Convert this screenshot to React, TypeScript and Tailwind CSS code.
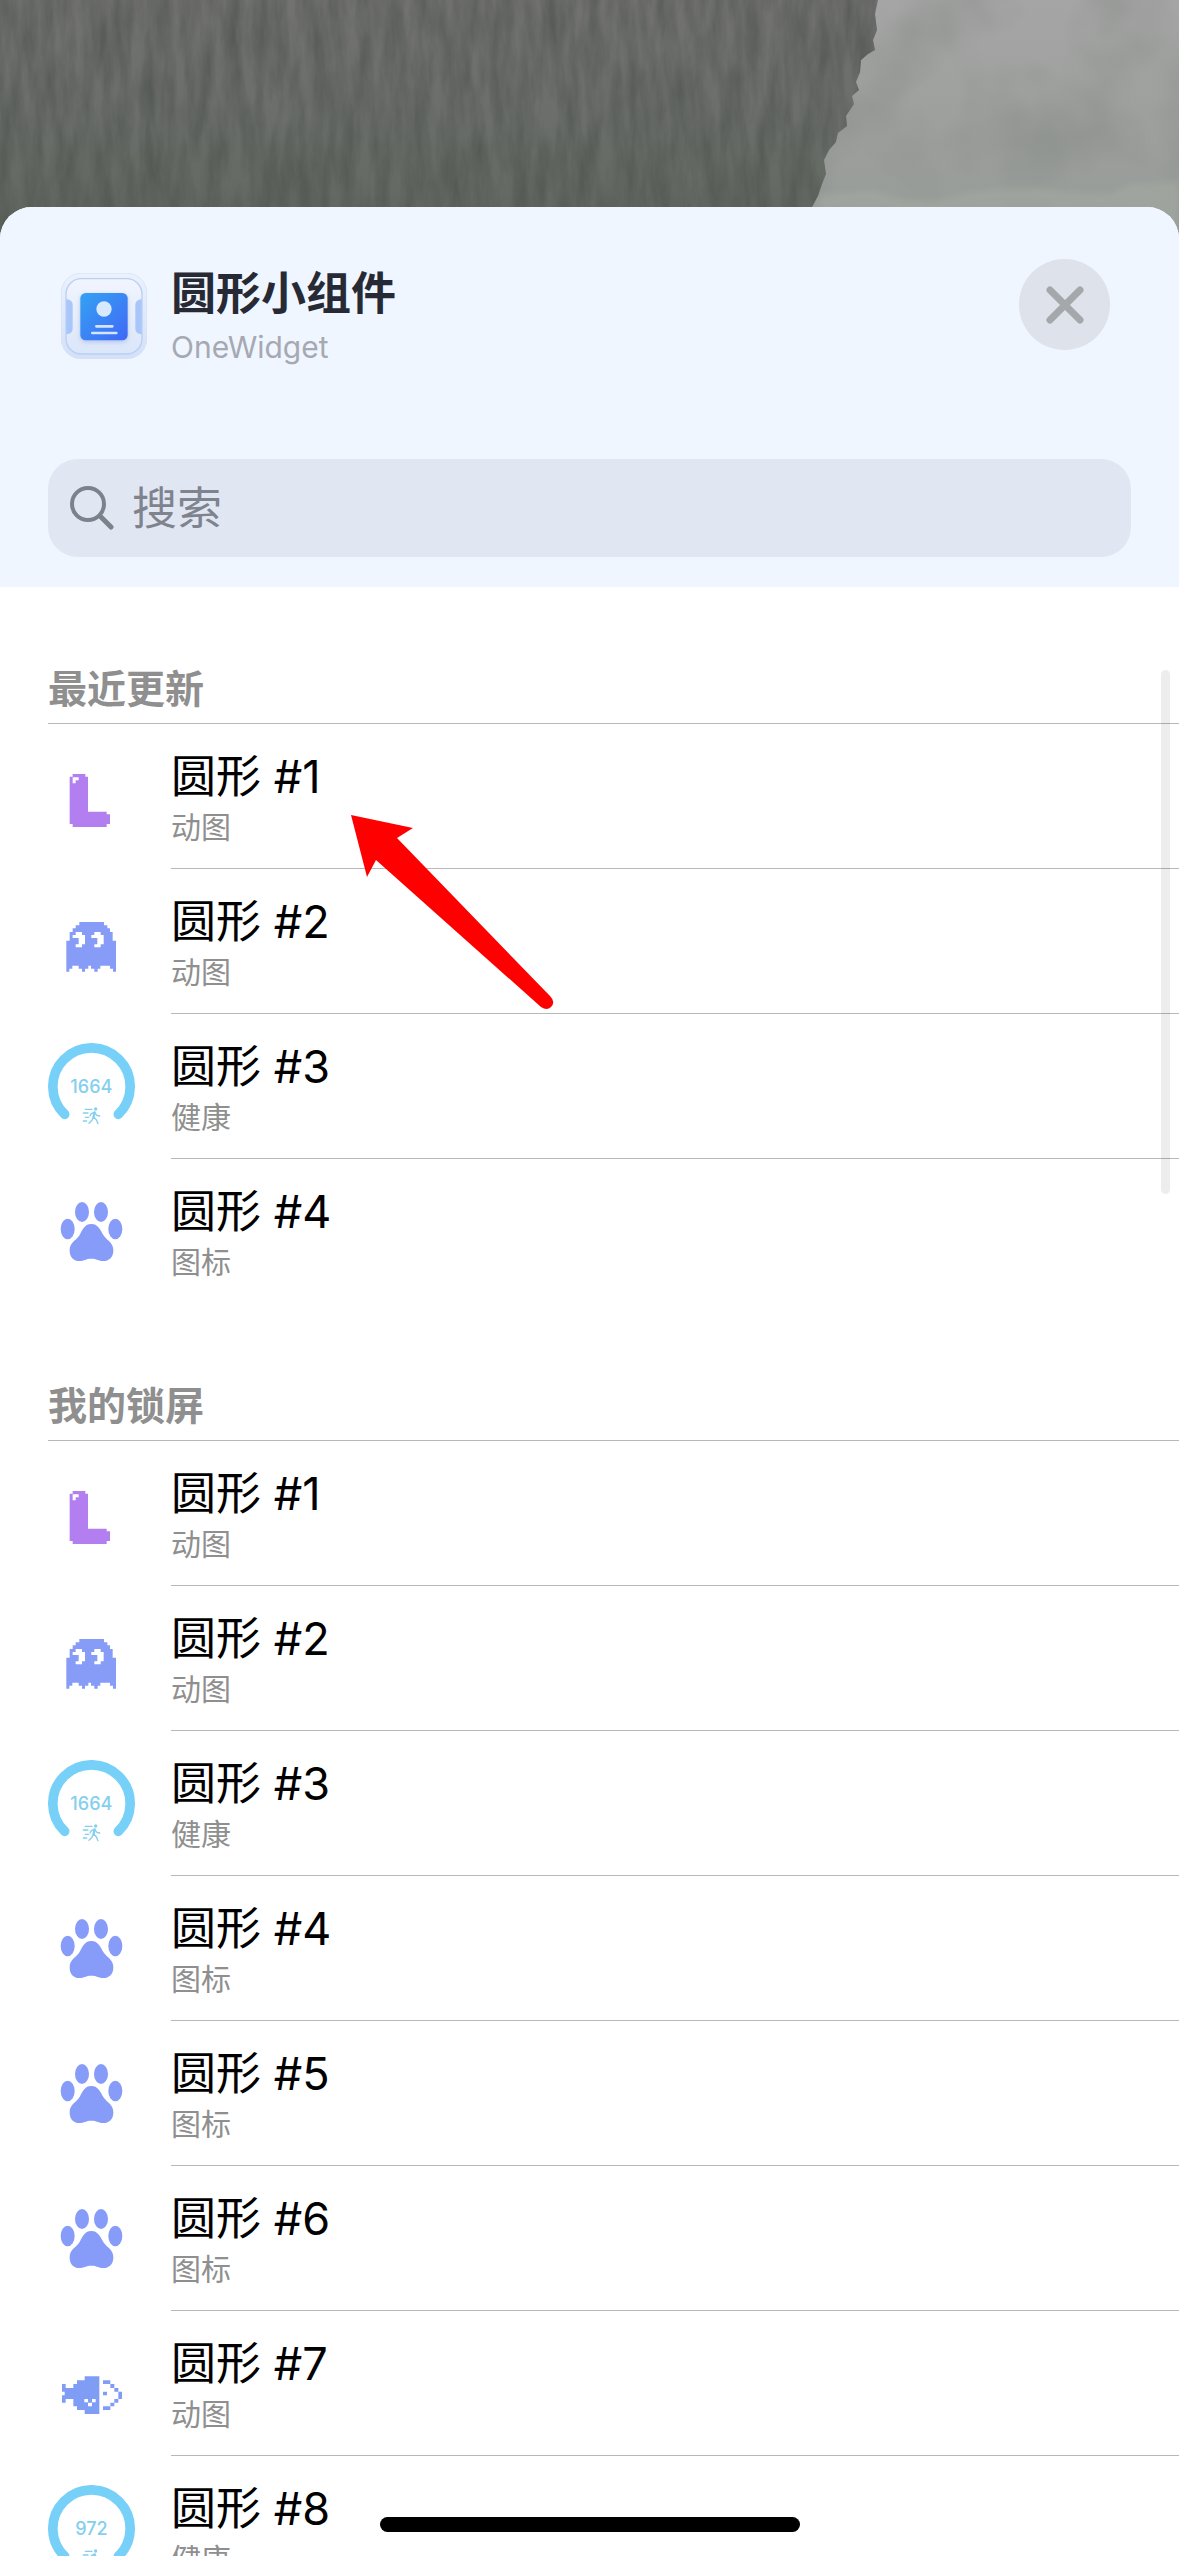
import React from "react";

type IconKind = "block" | "ghost" | "ring" | "paw" | "fish";
type Item = { id: number; kind: IconKind; category: string; value?: string };

const recent: Item[] = [
  { id: 1, kind: "block", category: "动图" },
  { id: 2, kind: "ghost", category: "动图" },
  { id: 3, kind: "ring", category: "健康", value: "1664" },
  { id: 4, kind: "paw", category: "图标" },
];

const lockScreen: Item[] = [
  ...recent,
  { id: 5, kind: "paw", category: "图标" },
  { id: 6, kind: "paw", category: "图标" },
  { id: 7, kind: "fish", category: "动图" },
  { id: 8, kind: "ring", category: "健康", value: "972" },
];

function Wallpaper() {
  const edge =
    "M0 0H878L875 14L877 30L873 40L875 50L868 54L861 60L860 72L856 82L859 90L852 96L854 104L846 116L847 126L838 133L836 142L829 150L824 160L826 174L822 184L818 196L812 207L808 260H0Z";
  return (
    <svg
      className="absolute inset-x-0 top-0 h-[260px] w-full"
      viewBox="0 0 1179 260"
      preserveAspectRatio="none"
      aria-hidden="true"
    >
      <defs>
        <linearGradient id="darkTone" x1="0" y1="0" x2="0" y2="1">
          <stop offset="0" stopColor="#727271" />
          <stop offset="0.45" stopColor="#6b6e6b" />
          <stop offset="0.85" stopColor="#616860" />
        </linearGradient>
        <linearGradient id="lightTone" x1="0" y1="0" x2="0" y2="1">
          <stop offset="0" stopColor="#a5a5a5" />
          <stop offset="0.8" stopColor="#989c98" />
        </linearGradient>
        <filter id="fur" x="0" y="0" width="100%" height="100%" colorInterpolationFilters="sRGB">
          <feTurbulence type="fractalNoise" baseFrequency="0.07 0.014" numOctaves="4" seed="7" />
          <feColorMatrix values="0 0 0 0 0.29  0 0 0 0 0.31  0 0 0 0 0.29  1.1 0 0 0 -0.32" />
          <feComposite in2="SourceGraphic" operator="in" />
        </filter>
        <filter id="mist" x="0" y="0" width="100%" height="100%" colorInterpolationFilters="sRGB">
          <feTurbulence type="fractalNoise" baseFrequency="0.012 0.012" numOctaves="3" seed="3" />
          <feColorMatrix values="0 0 0 0 0.5  0 0 0 0 0.52  0 0 0 0 0.5  0.8 0 0 0 -0.3" />
        </filter>
        <filter id="soft">
          <feGaussianBlur stdDeviation="3" />
        </filter>
      </defs>
      <rect width="1179" height="260" fill="url(#lightTone)" />
      <rect width="1179" height="260" filter="url(#mist)" />
      <path
        d="M820 260V196L870 190L905 200L935 201L960 194L1000 189L1040 188L1080 193L1110 194L1130 184L1179 182V260Z"
        fill="#a3a7a1"
        opacity="0.7"
        filter="url(#soft)"
      />
      <path d={edge} fill="url(#darkTone)" />
      <path d={edge} fill="#000" filter="url(#fur)" />
    </svg>
  );
}

function AppIcon() {
  return (
    <svg className="size-[86px] shrink-0" viewBox="0 0 258 258" aria-hidden="true">
      <defs>
        <linearGradient id="tile" x1="0" y1="0" x2="1" y2="1">
          <stop offset="0" stopColor="#35a2f3" />
          <stop offset="1" stopColor="#3f68f6" />
        </linearGradient>
        <linearGradient id="frame" x1="0" y1="0" x2="0" y2="1">
          <stop offset="0" stopColor="#ebf2fd" />
          <stop offset="1" stopColor="#d3e0f9" />
        </linearGradient>
        <linearGradient id="plate" x1="0" y1="0" x2="0" y2="1">
          <stop offset="0" stopColor="#f1f5fe" />
          <stop offset="1" stopColor="#dbe6fa" />
        </linearGradient>
        <filter id="tileShadow" x="-20%" y="-20%" width="140%" height="150%">
          <feDropShadow dx="0" dy="5" stdDeviation="7" floodColor="#7f9bdc" floodOpacity="0.5" />
        </filter>
      </defs>
      <rect x="1" y="1" width="256" height="256" rx="58" fill="url(#frame)" stroke="#d0dff4" strokeWidth="2" />
      <rect x="15" y="17" width="228" height="226" rx="46" fill="url(#plate)" stroke="#b9cff5" strokeWidth="4" />
      <path d="M16 78Q35 82 35 94V168Q35 182 16 184Z" fill="#a9c6fb" />
      <path d="M242 78Q223 82 223 94V168Q223 182 242 184Z" fill="#a9c6fb" />
      <rect x="58" y="60" width="142" height="142" rx="16" fill="url(#tile)" filter="url(#tileShadow)" />
      <circle cx="129" cy="108" r="23" fill="#d8e8fd" />
      <path d="M106 160H154M94 180H166" stroke="#d3e4fd" strokeWidth="8" strokeLinecap="round" />
    </svg>
  );
}

function BlockIcon() {
  return (
    <svg className="size-[87px]" viewBox="144 69 261 261" aria-hidden="true">
      <path
        fill="#b37ff0"
        d="M218 132H256V140H264V245H320V253H330V282H320V291H218V282H209V140H218Z"
      />
      <path fill="#fff" d="M218 142H236V151H227V160H218Z" />
    </svg>
  );
}

function GhostIcon() {
  return (
    <svg className="size-[87px]" viewBox="144 504 261 261" aria-hidden="true">
      <path
        fill="#879cf6"
        d="M238 576H312V586H322V595H330V606H338V632H348V725H339V716H330V707H320V716H320V707H301V716H293V725H283V716H273V707H265V716H255V725H246V716H236V707H217V716H208V725H199V632H209V606H218V595H227V586H238Z"
      />
      <path
        fill="#fff"
        d="M227 606H246V615H255V643H246V652H227V643H236V624H218V615H227ZM283 606H302V615H311V643H302V652H283V643H292V624H274V615H283Z"
      />
    </svg>
  );
}

function RingIcon({ value }: { value: string }) {
  return (
    <svg className="size-[87px]" viewBox="144 69 261 261">
      <path
        d="M194 283A116 116 0 1 1 355 283"
        fill="none"
        stroke="#77d0f7"
        strokeWidth="29"
        strokeLinecap="round"
      />
      <text
        x="274"
        y="219"
        textAnchor="middle"
        fill="#83cfee"
        fontSize="54"
        fontWeight="500"
        fontFamily="Inter, sans-serif"
      >
        {value}
      </text>
      <circle cx="287" cy="267" r="5" fill="#83cfee" />
      <path
        d="M283 277L280 291L289 299L294 311M280 291L276 301L267 310M283 277L274 281L270 288M284 278L291 286L299 288M256 268H276M250 279H264M256 292H266M250 303H260"
        fill="none"
        stroke="#83cfee"
        strokeWidth="4"
        strokeLinecap="round"
        strokeLinejoin="round"
      />
      <path d="M284 277L281 290" stroke="#83cfee" strokeWidth="7" strokeLinecap="round" />
    </svg>
  );
}

function PawIcon() {
  return (
    <svg className="size-[87px]" viewBox="144 504 261 261" fill="#879cf9" aria-hidden="true">
      <ellipse cx="246" cy="576" rx="21" ry="30" />
      <ellipse cx="303" cy="576" rx="21" ry="30" />
      <ellipse cx="203" cy="627" rx="21" ry="31" />
      <ellipse cx="346" cy="627" rx="21" ry="31" />
      <path d="M274 612C296 612 301 632 312 648C324 664 340 668 340 692C340 712 326 723 310 723C296 723 290 716 274 716C258 716 252 723 238 723C222 723 209 712 209 692C209 668 225 664 237 648C247 632 252 612 274 612Z" />
    </svg>
  );
}

function FishIcon() {
  return (
    <svg className="size-[87px]" viewBox="144 90 261 261" fill="#7f9df5" aria-hidden="true">
      <path d="M186 222H197V234H220V222H231V211H254V199H298V312H254V300H231V289H220V267H197V278H186V256H194V245H186Z" />
      <path d="M309 211H331V222H309ZM331 222H343V234H331ZM343 234H355V245H343ZM355 245H366V267H355ZM343 267H355V278H343ZM331 278H343V289H331ZM309 289H331V300H309ZM309 245H321V256H309Z" />
      <path fill="#fff" d="M253 267H264V277H253ZM276 267H287V277H276ZM264 278H276V289H264Z" />
    </svg>
  );
}

function ItemIcon({ item }: { item: Item }) {
  switch (item.kind) {
    case "block":
      return <BlockIcon />;
    case "ghost":
      return <GhostIcon />;
    case "ring":
      return <RingIcon value={item.value ?? ""} />;
    case "paw":
      return <PawIcon />;
    default:
      return <FishIcon />;
  }
}

function Section({ title, items }: { title: string; items: Item[] }) {
  return (
    <section>
      <h2 className="ml-12 border-b border-[#b8b8b8] pt-[74px] pb-[6px] text-[39px] leading-[56px] font-bold text-[#8f8f8f]">
        {title}
      </h2>
      <ul>
        {items.map((item) => (
          <li key={item.id} className="group">
            <button type="button" className="flex h-[145px] w-full items-center gap-9 pl-12 text-left">
              <span className="shrink-0">
                <ItemIcon item={item} />
              </span>
              <span className="flex h-full flex-1 flex-col border-b border-[#b8b8b8] pt-[23px] group-last:border-transparent">
                <span className="text-[45px] leading-[60px] text-black">圆形 #{item.id}</span>
                <span className="text-[30px] leading-10 text-[#8f8f8f]">{item.category}</span>
              </span>
            </button>
          </li>
        ))}
      </ul>
    </section>
  );
}

export default function App() {
  return (
    <div
      lang="zh-CN"
      className="relative flex h-screen flex-col overflow-hidden bg-white pt-[207px] font-[Inter,'Noto_Sans_CJK_SC',sans-serif]"
    >
      <Wallpaper />
      <main className="relative flex min-h-0 flex-1 flex-col overflow-hidden rounded-t-[32px] bg-white">
        <header className="bg-[#eff6ff] px-12 pt-[52px] pb-[30px]">
          <div className="flex items-start pr-[21px] pl-[13px]">
            <div className="mt-2 flex flex-1 items-center gap-6">
              <AppIcon />
              <div>
                <h1 className="text-[45px] leading-[54px] font-bold text-[#272a35]">圆形小组件</h1>
                <p className="mt-2 text-[30px] leading-9 text-[#a6a9b1]">OneWidget</p>
              </div>
            </div>
            <button
              type="button"
              aria-label="关闭"
              className="flex size-[91px] items-center justify-center rounded-full bg-[#dee2ea]"
            >
              <svg className="size-10" viewBox="0 0 40 40" aria-hidden="true">
                <path d="M5 5L35 35M35 5L5 35" stroke="#a5a8aa" strokeWidth="7" strokeLinecap="round" />
              </svg>
            </button>
          </div>
          <div className="mt-[94px] flex h-[98px] items-center gap-[18px] rounded-[30px] bg-[#e1e7f2] pr-6 pl-[22px]">
            <svg className="size-11 shrink-0" viewBox="0 0 44 44" fill="none" stroke="#7d818c" aria-hidden="true">
              <circle cx="18" cy="18" r="16" strokeWidth="4" />
              <path d="M30 30L41 41" strokeWidth="5" strokeLinecap="round" />
            </svg>
            <input
              type="search"
              aria-label="搜索"
              placeholder="搜索"
              className="h-full min-w-0 flex-1 bg-transparent text-[45px] text-[#272a35] outline-none placeholder:text-[#7f838e]"
            />
          </div>
        </header>
        <div className="relative min-h-0 flex-1">
          <div className="h-full overflow-y-auto [scrollbar-width:none]">
            <Section title="最近更新" items={recent} />
            <Section title="我的锁屏" items={lockScreen} />
          </div>
          <div className="absolute top-[83px] right-[9px] h-[524px] w-[9px] rounded-full bg-black/7" />
          <svg
            className="pointer-events-none absolute top-[228px] left-[351px] h-[196px] w-[204px]"
            viewBox="0 0 204 196"
            aria-hidden="true"
          >
            <path fill="#f00" d="M0 0L62 13L46 23L199 181Q205 187 200 192Q196 196 190 192L25 45L16 62Z" />
          </svg>
        </div>
      </main>
      <div className="absolute bottom-6 left-1/2 h-[15px] w-[420px] -translate-x-1/2 rounded-full bg-black" />
    </div>
  );
}
